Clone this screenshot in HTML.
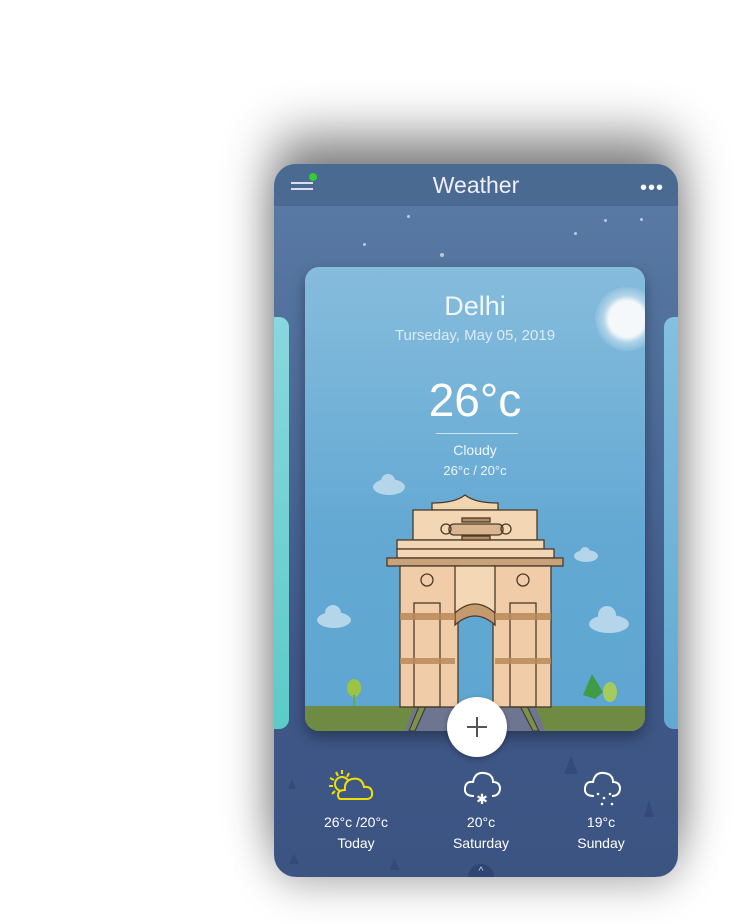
<!DOCTYPE html>
<html><head><style>
body{margin:0;width:752px;height:924px;background:#fff;position:relative;overflow:hidden;font-family:"Liberation Sans",sans-serif}
.phone{position:absolute;left:274px;top:164px;width:404px;height:713px;border-radius:22px;overflow:hidden;background:linear-gradient(#5a7ca5 0%,#4f6e9b 30%,#3f5888 70%,#3c5482 100%);box-shadow:0 -30px 50px rgba(0,0,0,.45),0 10px 40px rgba(0,0,0,.25)}
.hdr{position:absolute;left:0;top:0;width:404px;height:42px;background:#4a6a92;color:#eef;text-align:center;font-size:23px;line-height:42px}
.card{position:absolute;left:31px;top:103px;width:340px;height:464px;border-radius:14px;overflow:hidden;background:linear-gradient(#86bcdc,#62a8d3 60%,#5ea6d2);box-shadow:0 6px 14px rgba(0,0,0,.35)}
.t{position:absolute;width:340px;text-align:center;color:#f0f6fa}
.s{position:absolute;background:#fff;border-radius:50%;opacity:.6}
.bi{position:absolute;color:#fff;text-align:center;width:100px;font-size:14px}
</style></head><body>
<div class="phone">
 <div class="hdr">Weather</div>
 <div style="position:absolute;left:17px;top:18px;width:22px;height:2px;background:#dde"></div>
 <div style="position:absolute;left:17px;top:24px;width:22px;height:2px;background:#dde"></div>
 <div style="position:absolute;left:35px;top:9px;width:8px;height:8px;border-radius:50%;background:#3c3"></div>
 <div style="position:absolute;right:14px;top:13px;color:#fff;font-size:20px;letter-spacing:1px">•••</div>
 <div class="s" style="left:133px;top:51px;width:3px;height:3px"></div>
 <div class="s" style="left:166px;top:89px;width:4px;height:4px"></div>
 <div class="s" style="left:89px;top:79px;width:3px;height:3px"></div>
 <div class="s" style="left:330px;top:55px;width:3px;height:3px"></div>
 <div class="s" style="left:366px;top:54px;width:3px;height:3px"></div>
 <div class="s" style="left:300px;top:68px;width:3px;height:3px"></div>
 <div style="position:absolute;left:0;top:153px;width:15px;height:412px;border-radius:0 10px 10px 0;background:linear-gradient(#8ad7de,#5ccbc7)"></div>
 <div style="position:absolute;left:390px;top:153px;width:14px;height:412px;border-radius:10px 0 0 10px;background:linear-gradient(#84c0df,#62a9d3)"></div>
 <div class="card">
  <div style="position:absolute;left:290px;top:20px;width:64px;height:64px;border-radius:50%;background:radial-gradient(#f4f8fb 40%,rgba(255,255,255,.4) 52%,rgba(255,255,255,0) 75%)"></div>
  <div class="t" style="top:24px;font-size:27px">Delhi</div>
  <div class="t" style="top:60px;font-size:15px;color:#dcebf4">Turseday, May 05, 2019</div>
  <div class="t" style="top:106px;font-size:46px;color:#fff">26°c</div>
  <div style="position:absolute;left:131px;top:166px;width:82px;height:1px;background:#cfe3ef"></div>
  <div class="t" style="top:175px;font-size:14px">Cloudy</div>
  <div class="t" style="top:196px;font-size:13px">26°c / 20°c</div>
  <svg width="340" height="464" style="position:absolute;left:0;top:0">
   <g fill="#b4d5ea"><ellipse cx="84" cy="220" rx="16" ry="8"/><circle cx="83" cy="214" r="7"/>
   <ellipse cx="29" cy="353" rx="17" ry="8"/><circle cx="28" cy="346" r="8"/>
   <ellipse cx="304" cy="357" rx="20" ry="9"/><circle cx="302" cy="348" r="9"/>
   <ellipse cx="281" cy="289" rx="12" ry="6"/><circle cx="280" cy="285" r="5"/></g>
   <rect x="0" y="439" width="340" height="25" fill="#6e8a43"/>
   <path d="M110 439 L230 439 L240 464 L100 464Z" fill="#6e7590"/>
   <path d="M115 437 L122 437 L110 464 L104 464Z M214 437 L221 437 L234 464 L228 464Z" fill="#7e904a" stroke="#333" stroke-width="1"/>
   <g stroke="#4a3a2a" stroke-width="1.3">
    <path d="M127 243 L127 236 Q150 236 160 228 Q170 236 193 236 L193 243Z" fill="#f1d4b0"/>
    <rect x="108" y="243" width="124" height="30" fill="#f3d6b4"/>
    <rect x="92" y="273" width="147" height="9" fill="#f3d6b4"/>
    <rect x="92" y="282" width="157" height="9" fill="#f3d6b4"/>
    <rect x="82" y="291" width="176" height="8" fill="#c7a27a"/>
    <rect x="95" y="299" width="58" height="141" fill="#f0cda8"/>
    <rect x="188" y="299" width="58" height="141" fill="#f0cda8"/>
    <path d="M150 299 H190 V346 Q170 330 150 346Z" fill="#f4d7b4"/>
    <path d="M150 346 Q170 328 190 346 L190 358 Q170 340 150 358Z" fill="#c49a6e"/>
    <rect x="109" y="336" width="26" height="104" fill="none"/>
    <rect x="205" y="336" width="26" height="104" fill="none"/>
    <circle cx="122" cy="313" r="6" fill="none"/><circle cx="218" cy="313" r="6" fill="none"/>
    <rect x="144" y="257" width="54" height="11" rx="5" fill="#d9b590"/>
    <circle cx="141" cy="262" r="5" fill="none"/><circle cx="201" cy="262" r="5" fill="none"/>
    <rect x="157" y="251" width="28" height="4" fill="#b48a60"/><rect x="157" y="269" width="28" height="4" fill="#b48a60"/>
   </g>
   <g fill="#b98a5a" opacity=".85"><rect x="95" y="346" width="55" height="7"/><rect x="190" y="346" width="56" height="7"/><rect x="95" y="391" width="55" height="6"/><rect x="190" y="391" width="56" height="6"/></g>
   <ellipse cx="49" cy="421" rx="7" ry="9" fill="#9cc344"/><rect x="48" y="428" width="2" height="11" fill="#6a5"/>
   <path d="M287 407 L298 425 L290 432 L278 428Z" fill="#3f9b45"/><ellipse cx="305" cy="425" rx="7" ry="10" fill="#a4cc5c"/>
  </svg>
 </div>
 <div style="position:absolute;left:173px;top:533px;width:60px;height:60px;border-radius:50%;background:#fff;box-shadow:0 2px 6px rgba(0,0,0,.3)"></div>
 <div style="position:absolute;left:193px;top:562px;width:20px;height:2px;background:#555"></div>
 <div style="position:absolute;left:202px;top:553px;width:2px;height:20px;background:#555"></div>
 <svg width="404" height="713" style="position:absolute;left:0;top:0">
  <g fill="none" stroke="#f0e000" stroke-width="2"><circle cx="68" cy="620" r="7"/><path d="M62 608 L64 612 M56 614 L60 616 M68 606 L68 610 M75 609 L73 613 M55 622 L59 622 M58 630 L61 627"/>
  <path d="M67 635 H92 Q99 635 98 628 Q97 622 90 623 Q88 613 78 615 Q70 617 71 626 Q64 626 64 631 Q64 635 67 635Z" fill="#3e5787"/></g>
  <g fill="none" stroke="#fff" stroke-width="2"><path d="M200 632 Q190 632 191 624 Q192 617 199 618 Q201 608 210 609 Q219 610 219 618 Q226 618 226 625 Q225 632 218 632"/>
  <path d="M320 632 Q310 632 311 624 Q312 617 319 618 Q321 608 330 609 Q339 610 339 618 Q346 618 346 625 Q345 632 338 632"/></g>
  <text x="208" y="640" fill="#fff" font-size="14" text-anchor="middle">✱</text>
  <g fill="#fff"><circle cx="324" cy="630" r="1.3"/><circle cx="330" cy="634" r="1.3"/><circle cx="336" cy="630" r="1.3"/><circle cx="328" cy="640" r="1.3"/><circle cx="338" cy="640" r="1.3"/></g>
  <g fill="#35497a"><path d="M297 592 L290 610 L304 610Z M20 690 L15 700 L25 700Z M18 615 L14 625 L22 625Z M375 636 L370 653 L380 653Z M120 694 L116 706 L126 706Z"/></g>
  <circle cx="207" cy="713" r="13" fill="#2f4674"/><text x="207" y="710" fill="#dde" font-size="10" text-anchor="middle">^</text>
 </svg>
 <div class="bi" style="left:32px;top:650px">26°c /20°c</div>
 <div class="bi" style="left:32px;top:671px">Today</div>
 <div class="bi" style="left:157px;top:650px">20°c</div>
 <div class="bi" style="left:157px;top:671px">Saturday</div>
 <div class="bi" style="left:277px;top:650px">19°c</div>
 <div class="bi" style="left:277px;top:671px">Sunday</div>
</div>
</body></html>
